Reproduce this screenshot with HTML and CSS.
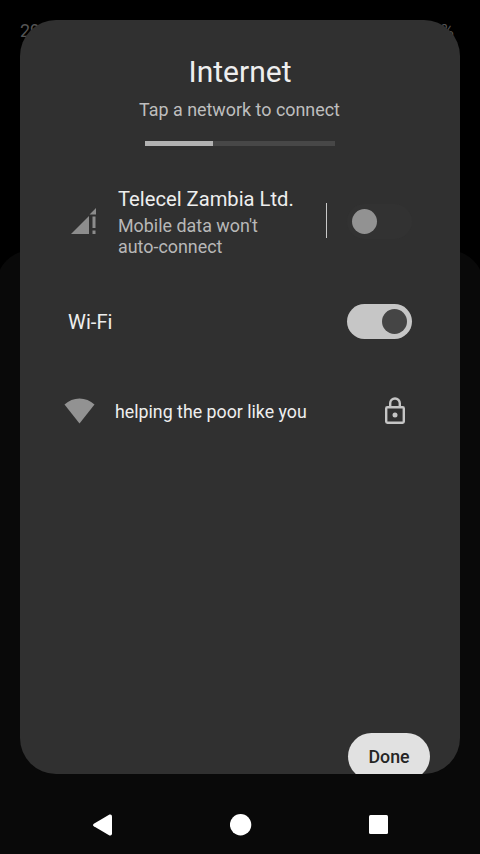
FILE: index.html
```html
<!DOCTYPE html>
<html lang="en">
<head>
<meta charset="utf-8">
<title>Internet</title>
<link rel="stylesheet" href="styles.css">
</head>
<body>
<div class="screen">
  <div class="backdrop"></div>
  <div class="status"><span>29</span><span>%</span></div>
  <main class="dialog">
    <h1 class="title">Internet</h1>
    <p class="subtitle">Tap a network to connect</p>
    <div class="progress"><div class="progress-bar"></div></div>
    <section class="mobile">
      <svg class="signal" width="26" height="27" viewBox="0 0 26 27"><path d="M0 26 18 8V26ZM18.500 6.500 25 0V6.500ZM21.500 8.500H24.500V20H21.500ZM21.500 22.500H24.500V26H21.500Z"/></svg>
      <div class="carrier">
        <div class="name">Telecel Zambia Ltd.</div>
        <div class="summary">Mobile data won't<br>auto-connect</div>
      </div>
      <div class="divider"></div>
      <div class="switch off"><div class="thumb"></div></div>
    </section>
    <section class="wifi">
      <span class="name">Wi-Fi</span>
      <div class="switch on"><div class="thumb"></div></div>
    </section>
    <section class="network">
      <svg class="wifi-icon" width="32" height="27" viewBox="0 0 32 27"><path d="M0.500 6.500Q7 .5 15.500 .5T30.500 6.500L15.500 25.500Z"/></svg>
      <span class="ssid">helping the poor like you</span>
      <svg class="lock" width="22" height="28" viewBox="0 0 22 28"><rect x="2.200" y="10.200" width="17.600" height="15.600" rx="1.200"/><path d="M6.200 10V6.300a4.800 4.800 0 0 1 9.600 0V10"/><circle cx="11" cy="18" r="2.500"/></svg>
    </section>
    <button class="done">Done</button>
  </main>
  <nav class="navbar">
    <svg width="20" height="22" viewBox="0 0 20 22"><path d="M.8 9.700 16.500.6Q19 0 19 2.500V19.500Q19 22 16.500 21.400L.8 12.300Q-.8 11 .8 9.700Z"/></svg>
    <svg width="22" height="22" viewBox="0 0 22 22"><circle cx="10.600" cy="10.700" r="10.700"/></svg>
    <svg width="20" height="20" viewBox="0 0 20 20"><rect width="19" height="19" rx="1.500"/></svg>
  </nav>
</div>
</body>
</html>
```
FILE: styles.css
```css
* { box-sizing: border-box; margin: 0; padding: 0; }
body { background: #000; font-family: Roboto, sans-serif; }
.screen { position: relative; width: 480px; height: 854px; padding: 20px 20px 0; overflow: hidden; background: #000; }
.backdrop { position: absolute; inset: 250px -4px 0; border-radius: 36px 36px 0 0; background: #090909; }
.status { position: absolute; top: 20px; left: 20px; right: 26px; display: flex; justify-content: space-between; font-size: 18px; line-height: 22px; color: #555; }
.dialog { position: relative; display: flex; flex-direction: column; height: 754px; padding: 33px 48px 0; border-radius: 36px; background: #303030; overflow: hidden; color: #eee; }
.dialog > * { flex: none; }
.title { font-size: 30px; line-height: 38px; font-weight: 400; text-align: center; }
.subtitle { margin-top: 9px; padding-right: 1px; font-size: 17.9px; line-height: 20px; text-align: center; color: #bebebe; }
.progress { width: 190px; height: 5px; margin: 21px auto 0; background: #474747; }
.progress-bar { width: 68px; height: 5px; background: #b2b2b2; }
.mobile { display: flex; align-items: center; height: 70px; margin-top: 40px; }
.signal { margin-left: 3px; fill: #8c8c8c; }
.carrier { width: 208px; margin-left: 21px; padding-top: 1px; }
.name { font-size: 20.2px; line-height: 24px; color: #eee; }
.summary { margin-top: 4px; font-size: 17.9px; line-height: 21px; color: #b8b8b8; }
.divider { width: 1px; height: 35px; margin: -1px 20px 0 0; background: #c8c8c8; }
.switch { display: flex; align-items: center; width: 65px; height: 35px; padding: 0 5px; border-radius: 18px; }
.thumb { width: 25px; height: 25px; border-radius: 50%; }
.off { background: #323232; }
.off .thumb { background: #929292; }
.on { justify-content: flex-end; background: #c6c6c6; }
.on .thumb { background: #454545; }
.wifi { display: flex; align-items: center; justify-content: space-between; height: 35px; margin-top: 48px; }
.network { display: flex; align-items: center; height: 30px; margin-top: 57px; }
.wifi-icon { margin-left: -4px; fill: #929292; }
.ssid { flex: 1; margin-left: 19px; padding-top: 2px; font-size: 17.8px; line-height: 22px; color: #eee; }
.lock { margin-right: 6px; fill: none; stroke: #c5c5c5; stroke-width: 2.400; }
.lock circle { fill: #c5c5c5; stroke: none; }
.done { align-self: flex-end; width: 82px; height: 47px; margin: 307px -18px 0 0; border: 0; border-radius: 24px; background: #e1e1e1; color: #252525; font: 500 17.8px/47px Roboto, sans-serif; }
.navbar { position: relative; display: flex; align-items: center; justify-content: space-between; height: 80px; padding: 21px 71px 0 73px; }
.navbar svg { fill: #fff; }
```
